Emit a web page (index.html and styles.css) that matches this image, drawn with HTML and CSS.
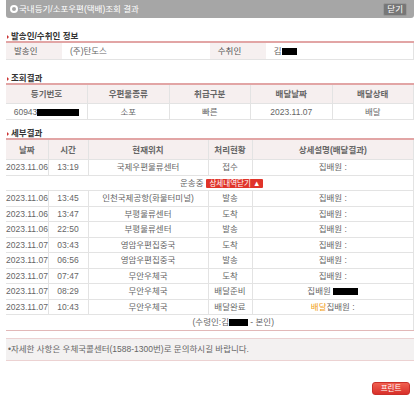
FILE: index.html
```html
<!DOCTYPE html>
<html lang="ko">
<head>
  <meta charset="UTF-8" />
  <title>국내등기/소포우편(택배)조회 결과</title>
  <link rel="stylesheet" href="styles.css">
</head>
<body>
  <div class="page">
    <div class="topbar">
      <h1><span class="ring"></span>국내등기/소포우편(택배)조회 결과</h1>
      <button class="close-btn">닫기</button>
    </div>

    <h2 class="sec-title">발송인/수취인 정보</h2>
    <table class="info">
      <tr>
        <th class="lbl">발송인</th>
        <td>(주)탄도스</td>
        <th class="lbl">수취인</th>
        <td>김<span class="mask m-name"></span></td>
      </tr>
    </table>

    <h2 class="sec-title">조회결과</h2>
    <table class="grid summary">
      <tr>
        <th>등기번호</th>
        <th>우편물종류</th>
        <th>취급구분</th>
        <th>배달날짜</th>
        <th>배달상태</th>
      </tr>
      <tr>
        <td>60943<span class="mask m-num"></span></td>
        <td>소포</td>
        <td>빠른</td>
        <td>2023.11.07</td>
        <td>배달</td>
      </tr>
    </table>

    <h2 class="sec-title tight">세부결과</h2>
    <table class="grid detail">
      <colgroup>
        <col class="c-date"><col class="c-time"><col class="c-place"><col class="c-state"><col>
      </colgroup>
      <tr>
        <th>날짜</th>
        <th>시간</th>
        <th>현재위치</th>
        <th>처리현황</th>
        <th>상세설명(배달결과)</th>
      </tr>
      <tr><td>2023.11.06</td><td>13:19</td><td>국제우편물류센터</td><td>접수</td><td>집배원 :</td></tr>
      <tr class="transit">
        <td colspan="5"><span class="transit-lbl">운송중</span><span class="detail-btn">상세내역닫기 ▲</span></td>
      </tr>
      <tr><td>2023.11.06</td><td>13:45</td><td>인천국제공항(화물터미널)</td><td>발송</td><td>집배원 :</td></tr>
      <tr><td>2023.11.06</td><td>13:47</td><td>부평물류센터</td><td>도착</td><td>집배원 :</td></tr>
      <tr><td>2023.11.06</td><td>22:50</td><td>부평물류센터</td><td>발송</td><td>집배원 :</td></tr>
      <tr><td>2023.11.07</td><td>03:43</td><td>영암우편집중국</td><td>도착</td><td>집배원 :</td></tr>
      <tr><td>2023.11.07</td><td>06:56</td><td>영암우편집중국</td><td>발송</td><td>집배원 :</td></tr>
      <tr><td>2023.11.07</td><td>07:47</td><td>무안우체국</td><td>도착</td><td>집배원 :</td></tr>
      <tr><td>2023.11.07</td><td>08:29</td><td>무안우체국</td><td>배달준비</td><td>집배원 <span class="mask m-man"></span></td></tr>
      <tr><td>2023.11.07</td><td>10:43</td><td>무안우체국</td><td>배달완료</td><td><span class="orange">배달</span>집배원 :</td></tr>
      <tr class="receiver">
        <td colspan="5">(수령인:김<span class="mask m-recv"></span> - 본인)</td>
      </tr>
    </table>

    <div class="notice">•자세한 사항은 우체국콜센터(1588-1300번)로 문의하시길 바랍니다.</div>

    <div class="actions">
      <button class="print-btn">프린트</button>
    </div>
  </div>
</body>
</html>
```

FILE: styles.css
```css
body {
  margin: 0;
  padding: 0;
  background-color: #fff;
  font-family: "Liberation Sans", "Noto Sans CJK KR", sans-serif;
  font-size: 8.5px;
  line-height: 10px;
  color: #666;
}

.page {
  padding: 0 6px;
}

.topbar {
  height: 18px;
  background-color: #a6a6a6;
  border-radius: 0 0 3px 3px;
  display: flex;
  align-items: center;
  justify-content: space-between;
  padding: 0 7px 0 4px;
}

.topbar h1 {
  margin: 0;
  font-size: 8.5px;
  font-weight: normal;
  color: #fff;
  display: flex;
  align-items: center;
}

.ring {
  width: 4px;
  height: 4px;
  border: 2px solid #fff;
  border-radius: 50%;
  margin-right: 1px;
}

.close-btn {
  font-family: inherit;
  font-size: 8.5px;
  color: #fff;
  background-color: #777;
  border: 1px solid #999;
  border-radius: 2px;
  padding: 0 3px;
  height: 13px;
  line-height: 11px;
}

.sec-title {
  margin: 14px 0 0;
  font-size: 8.5px;
  line-height: 9px;
  height: 9px;
  color: #333;
  font-weight: bold;
  padding-left: 5px;
  position: relative;
}

.sec-title.tight {
  margin-top: 9px;
}

.sec-title::before {
  content: "";
  position: absolute;
  left: 1px;
  top: 3px;
  border-left: 2px solid #c33;
  border-top: 2px solid transparent;
  border-bottom: 2px solid transparent;
}

table {
  width: 100%;
  border-collapse: collapse;
  table-layout: fixed;
}

.info {
  border-top: 2px solid #e2a5a5;
}

.info th,
.info td {
  height: 16px;
  padding: 0 0 0 8px;
  text-align: left;
  border-bottom: 1px solid #e3e3e3;
  font-weight: normal;
}

.info th.lbl {
  width: 48px;
  background-color: #f6f0f0;
  color: #555;
}

.info td:last-child {
  border-right: 1px solid #e3e3e3;
}

.grid {
  border-top: 2px solid #e2a5a5;
}

.grid th {
  background-color: #f6efef;
  color: #666;
  font-weight: bold;
  height: 18px;
  padding: 0;
  border: 1px solid #e3e3e3;
  border-top: none;
}

.grid td {
  text-align: center;
  padding: 0;
  border: 1px solid #e3e3e3;
}

.grid tr > :first-child {
  border-left: none;
}

.summary td {
  height: 15px;
}

.summary th:last-child,
.summary td:last-child {
  border-right: 1px solid #e3e3e3;
}

.detail {
  border-bottom: 1px solid #e2b8b8;
}

.detail th {
  height: 19px;
}

.detail td {
  height: 14.5px;
}

.detail th:last-child,
.detail td:last-child {
  border-right: 1px solid #e3e3e3;
}

.c-date { width: 42px; }
.c-time { width: 40px; }
.c-place { width: 120px; }
.c-state { width: 44px; }

.transit td {
  text-align: left;
  padding-left: 174px;
}

.transit-lbl {
  margin-right: 3px;
}

.detail-btn {
  display: inline-block;
  background-color: #e0342a;
  color: #fff;
  font-size: 7.5px;
  line-height: 9px;
  padding: 0 3px;
  border-radius: 1px;
  vertical-align: middle;
}

.receiver td {
  text-align: right;
  padding-right: 139px;
  border-bottom: 1px solid #e2b8b8;
}

.orange {
  color: #f0a020;
}

.mask {
  display: inline-block;
  background-color: #000;
  height: 7px;
  vertical-align: -1px;
}

.m-name { width: 15px; }
.m-num { width: 42px; }
.m-man { width: 25px; }
.m-recv { width: 19px; }

.notice {
  margin-top: 7px;
  background-color: #f3f1f1;
  border-top: 1px solid #ecd2d2;
  border-bottom: 1px solid #ecd2d2;
  padding: 0 2px;
  height: 21px;
  line-height: 21px;
}

.actions {
  display: flex;
  justify-content: flex-end;
  padding: 21px 4px 0 0;
}

.print-btn {
  font-family: inherit;
  font-size: 7.5px;
  color: #fff;
  background: linear-gradient(#f06050, #d8302a);
  border: 1px solid #c9302a;
  border-radius: 3px;
  width: 38px;
  height: 13px;
  padding: 0;
  line-height: 11px;
}
```
